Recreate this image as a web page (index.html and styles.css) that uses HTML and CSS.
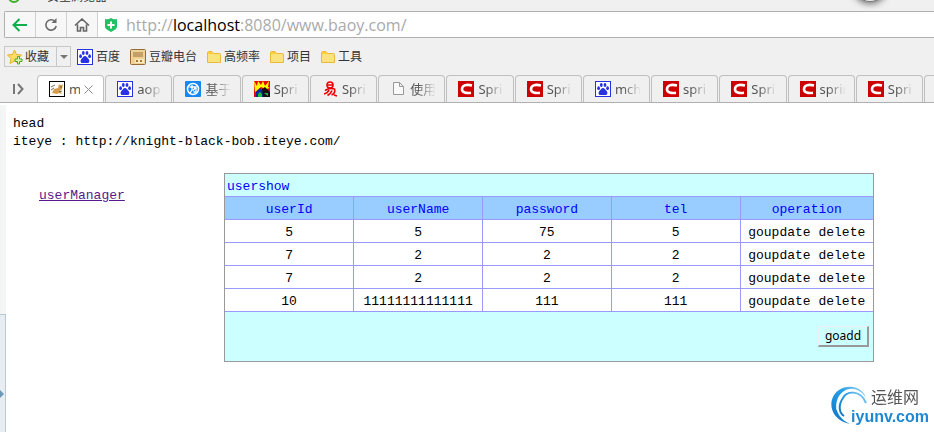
FILE: index.html
```
<!DOCTYPE html>
<html lang="zh-CN">
<head>
  <meta charset="UTF-8">
  <meta name="viewport" content="width=device-width, initial-scale=1.0">
  <title>my baoy</title>
  <link rel="stylesheet" href="styles.css">
</head>
<body>

  <!-- shared icons -->
  <svg class="defs" width="0" height="0">
    <symbol id="paw" viewBox="0 0 16 16">
      <rect x="0.5" y="0.5" width="15" height="15" fill="#fff" stroke="#2932e1"/>
      <g fill="#2932e1">
        <ellipse cx="3.6" cy="7.2" rx="1.4" ry="1.9"/>
        <ellipse cx="6.3" cy="4" rx="1.4" ry="2"/>
        <ellipse cx="10" cy="4" rx="1.4" ry="2"/>
        <ellipse cx="12.6" cy="7.2" rx="1.4" ry="1.9"/>
        <path d="M8 7c1.5 0 2 1.4 3.2 2.5 1.8 1.7 1.6 4.5-.7 4.5H5.5C3.2 14 3 11.2 4.8 9.5 6 8.4 6.5 7 8 7z"/>
      </g>
    </symbol>
    <symbol id="csdn" viewBox="0 0 16 16">
      <rect width="16" height="16" fill="#c00"/>
      <path d="M14 4.500C8 3 4 4.500 4 8.200c0 3.300 4 4.300 9 3.600" fill="none" stroke="#fff" stroke-width="2.600"/>
    </symbol>
    <symbol id="folder" viewBox="0 0 14 12">
      <path d="M0.5 11.5V1.5Q0.5 0.5 1.5 0.5H5l1.5 2h6Q13.5 2.5 13.5 3.5v8z" fill="#fae27f" stroke="#eab93c"/>
      <path d="M1 1h4l1 2H1z" fill="#ffcd36"/>
    </symbol>
  </svg>

  <header class="browser">
    <div class="titlebar">
      <span class="logo"></span>
      <span class="title">安全浏览器</span>
      <span class="bubble"></span>
    </div>

    <div class="address">
      <button class="nav" aria-label="back">
        <svg width="16" height="14" viewBox="0 0 16 14"><path d="M15 7H2M7.5 1L1.5 7l6 6" fill="none" stroke="#0db14b" stroke-width="2"/></svg>
      </button>
      <button class="nav" aria-label="reload">
        <svg width="14" height="14" viewBox="0 0 14 14"><path d="M11 3.500A5.200 5.200 0 1 0 12.200 8" fill="none" stroke="#6b6b6b" stroke-width="1.600"/><path d="M12.500 0v5H7.500z" fill="#6b6b6b"/></svg>
      </button>
      <button class="nav" aria-label="home">
        <svg width="16" height="14" viewBox="0 0 16 14"><path d="M1 7.500L8 1l7 6.500M3.500 6.500V13H6.500V9.500h3V13h3V6.500" fill="none" stroke="#666" stroke-width="1.600"/></svg>
      </button>
      <label class="url">
        <svg width="12" height="14" viewBox="0 0 12 14"><path d="M0 1q3 1 6-1 3 2 6 1v8q0 2-6 5-6-3-6-5z" fill="#22c064"/><path d="M6 3.500v7M2.500 7h7" stroke="#fff" stroke-width="2"/></svg>
        <span>http://<b>localhost</b>:8080/www.baoy.com/</span>
      </label>
    </div>

    <nav class="bookmarks">
      <div class="fav">
        <button class="fav-main">
          <svg width="16" height="16" viewBox="0 0 16 16"><path d="M7.5 1l2 4.500 5 .5-3.500 3.500 1 5-4.500-2.500L3 14.500l1-5L0.500 6l5-.5z" fill="#ffdc68" stroke="#eab030"/><path d="M10.500 7.500h2v2.500h2.500v2.500h-2.500V15h-2v-2.500H8V10h2.500z" fill="#dff5bd" stroke="#4aa81c"/></svg>
          收藏
        </button>
        <button class="fav-more" aria-label="more"></button>
      </div>
      <a href="#"><svg width="16" height="16"><use href="#paw"/></svg>百度</a>
      <a href="#">
        <svg width="16" height="16" viewBox="0 0 16 16"><rect x="0.5" y="0.5" width="15" height="15" rx="1" fill="#efd296" stroke="#986a3a"/><rect x="3" y="3" width="10" height="5" fill="#c4a066"/><rect x="5" y="10" width="9" height="4" fill="#fae9bd"/><path d="M6 11h2v2H6zM10 11h2v2h-2z" fill="#a3783f"/></svg>豆瓣电台</a>
      <a href="#"><svg width="14" height="12"><use href="#folder"/></svg>高频率</a>
      <a href="#"><svg width="14" height="12"><use href="#folder"/></svg>项目</a>
      <a href="#"><svg width="14" height="12"><use href="#folder"/></svg>工具</a>
    </nav>

    <div class="tabs">
      <button class="tab-list" aria-label="tab list">
        <svg width="11" height="12" viewBox="0 0 11 12"><path d="M1 1v10M5 1l4.500 5L5 11" fill="none" stroke="#777" stroke-width="2"/></svg>
      </button>
      <button class="tab active">
        <svg width="16" height="16" viewBox="0 0 16 16"><rect x="0.5" y="0.5" width="15" height="15" fill="#fff" stroke="#000"/><path d="M3 12l2-4 4-1 1-4 1 1h2l1-1-1 5-2 2 2 3-3-1-2 1z" fill="#d69d4d"/><path d="M2 6l4-2M2 9l3-2M10 11l3-1M11 6h2" stroke="#5a4630" stroke-width="0.8"/></svg>
        <span>m</span>
        <svg class="close" width="9" height="9" viewBox="0 0 9 9"><path d="M0.500 0.500l8 8M8.500 0.500l-8 8" stroke="#8b8b8b"/></svg>
      </button>
      <button class="tab"><svg width="16" height="16"><use href="#paw"/></svg><span class="fade">aop</span></button>
      <button class="tab">
        <svg width="16" height="16" viewBox="0 0 16 16"><rect width="16" height="16" rx="1" fill="#1687f0"/><circle cx="8" cy="8" r="5.500" fill="none" stroke="#fff" stroke-width="1.500"/><path d="M4.500 6h6.500L8 9.500M7 4v5l-2 3M11 6v5H8.500" fill="none" stroke="#fff" stroke-width="1.300"/></svg>
        <span class="fade">基于</span>
      </button>
      <button class="tab">
        <svg width="16" height="16" viewBox="0 0 16 16"><path d="M0 0h16v16H0z" fill="#e00"/><path d="M0 0l3 5 1-5 3 4 2-4 2 5 4-5-1 6 2 1-4 1-5-2-6 5z" fill="#ff0"/><path d="M2 16v-5l4-4 4 4v5z" fill="#0a2a9a"/><path d="M8 8l3-2 5 5v5H9z" fill="#111"/><path d="M4 16v-3l2-2 2 2v3zM10 12h4v3z" fill="#1dbb3a"/></svg>
        <span class="fade">Spri</span>
      </button>
      <button class="tab">
        <svg width="16" height="16" viewBox="0 0 16 16"><g fill="none" stroke="#e00" stroke-width="1.600"><circle cx="8" cy="4" r="3"/><path d="M5.5 4h5M3 9.500q4-3 9.500-1.500c1 2 0 5-3 6M7 9q-1 3-5 4M10 9.500q-1 3-4.500 5M12 14l3 1"/></g></svg>
        <span class="fade">Spri</span>
      </button>
      <button class="tab">
        <svg width="16" height="16" viewBox="0 0 16 16"><path d="M3.5 1.500h6l4 4v8h-10zM9.500 1.500v4h4" fill="#fafafa" stroke="#999"/></svg>
        <span class="fade">使用</span>
      </button>
      <button class="tab"><svg width="16" height="16"><use href="#csdn"/></svg><span class="fade">Spri</span></button>
      <button class="tab"><svg width="16" height="16"><use href="#csdn"/></svg><span class="fade">Spri</span></button>
      <button class="tab"><svg width="16" height="16"><use href="#paw"/></svg><span class="fade">mch</span></button>
      <button class="tab"><svg width="16" height="16"><use href="#csdn"/></svg><span class="fade">spri</span></button>
      <button class="tab"><svg width="16" height="16"><use href="#csdn"/></svg><span class="fade">Spri</span></button>
      <button class="tab"><svg width="16" height="16"><use href="#csdn"/></svg><span class="fade">sprin</span></button>
      <button class="tab"><svg width="16" height="16"><use href="#csdn"/></svg><span class="fade">Spri</span></button>
      <button class="tab last" aria-label="tab"></button>
    </div>
  </header>

  <div class="view">
    <aside class="side">
      <button class="side-toggle" aria-label="sidebar"></button>
    </aside>

    <main class="page">
      <div class="head">head<br>iteye : http://knight-black-bob.iteye.com/</div>

      <div class="body">
        <div class="menu"><a href="#">userManager</a></div>

        <div class="panel">
          <div class="caption">usershow</div>
          <table>
            <thead>
              <tr><th>userId</th><th>userName</th><th>password</th><th>tel</th><th>operation</th></tr>
            </thead>
            <tbody>
              <tr><td>5</td><td>5</td><td>75</td><td>5</td><td><a href="#">goupdate</a> <a href="#">delete</a></td></tr>
              <tr><td>7</td><td>2</td><td>2</td><td>2</td><td><a href="#">goupdate</a> <a href="#">delete</a></td></tr>
              <tr><td>7</td><td>2</td><td>2</td><td>2</td><td><a href="#">goupdate</a> <a href="#">delete</a></td></tr>
              <tr><td>10</td><td>11111111111111</td><td>111</td><td>111</td><td><a href="#">goupdate</a> <a href="#">delete</a></td></tr>
            </tbody>
          </table>
          <div class="actions"><button class="goadd">goadd</button></div>
        </div>
      </div>
    </main>
  </div>

  <!-- watermark -->
  <div class="watermark">
    <svg width="40" height="42" viewBox="0 0 40 42">
      <defs>
        <linearGradient id="wm" x1="0" y1="1" x2="1" y2="0">
          <stop offset="0" stop-color="#0b72c4"/>
          <stop offset="0.6" stop-color="#2aa0e6"/>
          <stop offset="1" stop-color="#9bd6f7"/>
        </linearGradient>
      </defs>
      <path d="M36 13C32 1 18-1 9 5-3 13-2 34 20 39 7 33 3 21 9 11 15 2 28 0 36 13z" fill="url(#wm)"/>
      <path d="M36 18C31 5 17 5 13 13 8 20 9 28 14 31" fill="none" stroke="url(#wm)" stroke-width="2"/>
      <path d="M7 25C6 13 15 4 28 6" fill="none" stroke="#fff"/>
    </svg>
    <span class="wm-cn">运维网</span>
    <span class="wm-en">iyunv.com</span>
  </div>

</body>
</html>
```
FILE: styles.css
```
* {
  box-sizing: border-box;
}

body {
  margin: 0;
  min-height: 100vh;
  display: flex;
  flex-direction: column;
  overflow: hidden;
  background: #fff;
  color: #000;
  font-family: "Liberation Mono", "Noto Sans CJK SC", monospace;
  font-size: 13px;
  line-height: 18px;
}

button {
  margin: 0;
  padding: 0;
  border: none;
  background: none;
  font: inherit;
  color: inherit;
}

svg {
  display: block;
  flex: none;
}

.defs {
  position: absolute;
}

/* browser chrome */
.browser {
  background: #f0f0f0;
  color: #333;
  font-family: "Noto Sans", "Noto Sans CJK SC", sans-serif;
  font-size: 12px;
}

.titlebar {
  position: relative;
  height: 11px;
  overflow: hidden;
}

.logo {
  position: absolute;
  left: 8px;
  top: -9px;
  width: 12px;
  height: 12px;
  border: 2px solid #3fae2a;
  border-radius: 50%;
}

.title {
  position: absolute;
  left: 47px;
  top: -12px;
}

.bubble {
  position: absolute;
  right: 46px;
  top: -34px;
  width: 36px;
  height: 36px;
  border-radius: 50%;
  background: #eee;
  border: 1px solid #777;
  box-shadow: 0 2px 6px #777;
}

.address {
  display: flex;
  height: 27px;
  margin-left: 4px;
  border: 1px solid #b0b0b0;
  border-right: none;
  border-radius: 2px 0 0 2px;
  background: #fff;
}

.nav {
  width: 31px;
  display: flex;
  align-items: center;
  justify-content: center;
  background: #f7f7f7;
  border-right: 1px solid #d0d0d0;
}

.url {
  display: flex;
  align-items: center;
  gap: 9px;
  padding-left: 7px;
  color: #aaa;
  font-family: "Open Sans", sans-serif;
  font-size: 16px;
}

.url b {
  font-weight: normal;
  color: #000;
}

.bookmarks {
  display: flex;
  align-items: center;
  gap: 10px;
  height: 37px;
  padding-left: 4px;
}

.bookmarks a {
  display: flex;
  align-items: center;
  gap: 3px;
  color: #333;
  text-decoration: none;
}

.fav {
  display: flex;
  height: 21px;
  margin-right: -4px;
  border: 1px solid #c8c8c8;
}

.fav-main {
  display: flex;
  align-items: center;
  gap: 2px;
  width: 52px;
  padding-left: 2px;
  border-right: 1px solid #c8c8c8;
}

.fav-more {
  width: 13px;
}

.fav-more::before {
  content: "";
  display: block;
  margin: 0 auto;
  width: 0;
  border: 4px solid transparent;
  border-top-color: #777;
  border-bottom: none;
}

.tabs {
  display: flex;
  height: 28px;
  overflow: hidden;
  border-bottom: 1px solid #b0b0b0;
}

.tab-list {
  flex: none;
  width: 37px;
  display: flex;
  align-items: center;
  justify-content: center;
}

.tab {
  flex: 1 1 0;
  display: flex;
  align-items: center;
  gap: 4px;
  min-width: 0;
  margin-right: 1px;
  padding-left: 11px;
  border: 1px solid #c0c0c0;
  border-bottom: none;
  border-radius: 4px 4px 0 0;
  color: #555;
  font-size: 13px;
}

.tab.last {
  flex: none;
  width: 10px;
  margin-right: 0;
  padding: 0;
  border-right: none;
  border-radius: 4px 0 0 0;
}

.tab span {
  width: 26px;
  overflow: hidden;
  text-align: left;
  white-space: nowrap;
}

.tab .fade {
  -webkit-mask-image: linear-gradient(90deg, #000 30%, transparent);
  mask-image: linear-gradient(90deg, #000 30%, transparent);
}

.tab.active {
  background: #fff;
}

.tab.active span {
  width: 11px;
}

/* web page */
.view {
  flex: 1;
  display: flex;
}

.side {
  width: 6px;
  margin-top: 2px;
  padding-top: 209px;
  background: #f4f6f6;
  display: flex;
}

.side-toggle {
  width: 6px;
  border-top: 1px solid #b8c8d4;
  border-right: 1px solid #b8c8d4;
  background: #e8edf2;
}

.side-toggle::before {
  content: "";
  display: block;
  margin-top: 40px;
  width: 0;
  border: 4px solid transparent;
  border-left-color: #6b9ab8;
  border-right: none;
}

.page {
  flex: 1;
  padding: 12px 60px 0 7px;
}

.body {
  display: flex;
  margin-top: 22px;
}

.menu {
  width: 211px;
  padding: 14px 0 0 26px;
}

.menu a {
  color: #551a8b;
}

.panel {
  flex: 1;
  border: 1px solid #999;
  background: #cff;
}

.caption {
  height: 22px;
  padding: 4px 2px 0;
  color: #00f;
}

table {
  width: 100%;
  border-collapse: collapse;
  table-layout: fixed;
  background: #fff;
  border-bottom: 1px solid #99f;
}

th,
td {
  height: 23px;
  padding: 3px 0 0;
  border-top: 1px solid #99f;
  border-right: 1px solid #99f;
  font-weight: normal;
  text-align: center;
}

th {
  background: #9cf;
  color: #00f;
}

th:last-child {
  width: 133px;
}

th:last-child,
td:last-child {
  border-right: none;
}

td a {
  color: #000;
  text-decoration: none;
}

.actions {
  display: flex;
  justify-content: flex-end;
  padding: 14px 4px;
}

.goadd {
  width: 51px;
  height: 21px;
  border: 1px solid #eee;
  border-right: 2px solid #999;
  border-bottom: 2px solid #999;
  font-family: "Noto Sans", sans-serif;
  font-size: 12px;
  line-height: 18px;
}

/* watermark */
.watermark {
  position: fixed;
  right: 4px;
  bottom: 5px;
  width: 100px;
  height: 42px;
  font-family: "Liberation Sans", "Noto Sans CJK SC", sans-serif;
}

.wm-cn {
  position: absolute;
  left: 41px;
  top: 4px;
  color: #555;
  font-size: 16px;
}

.wm-en {
  position: absolute;
  right: 1px;
  bottom: 1px;
  color: #1e88d2;
  font-size: 16px;
  font-weight: bold;
}
```
